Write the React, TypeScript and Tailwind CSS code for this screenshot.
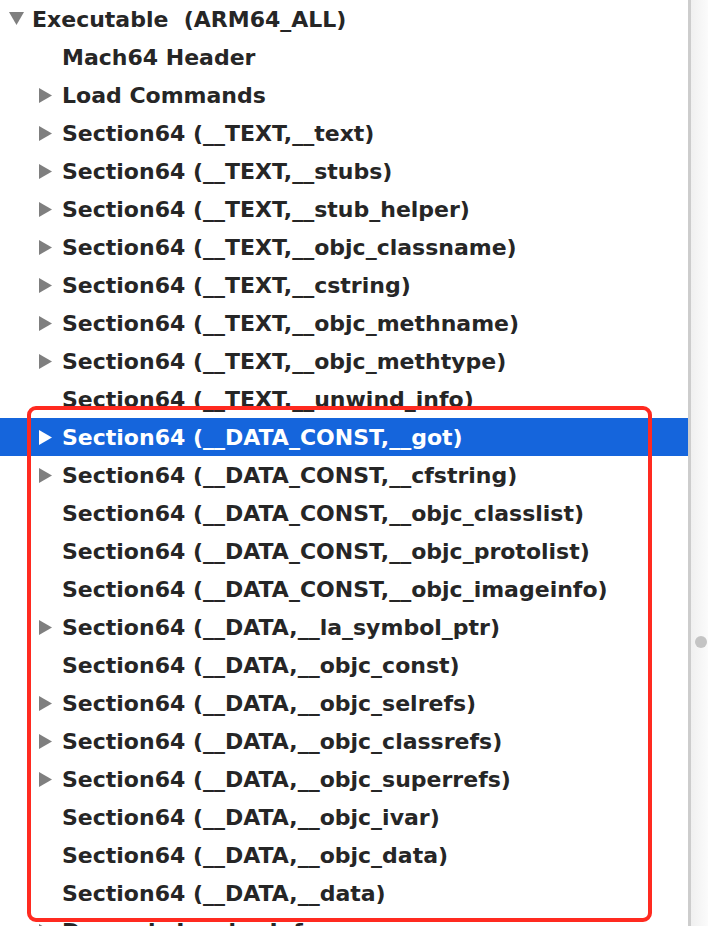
import React from "react";

type Row = { label: string; level: number; arrow: "none" | "right" | "down"; selected?: boolean };

const rows: Row[] = [
  { label: "Executable  (ARM64_ALL)", level: 0, arrow: "down" },
  { label: "Mach64 Header", level: 1, arrow: "none" },
  { label: "Load Commands", level: 1, arrow: "right" },
  { label: "Section64 (__TEXT,__text)", level: 1, arrow: "right" },
  { label: "Section64 (__TEXT,__stubs)", level: 1, arrow: "right" },
  { label: "Section64 (__TEXT,__stub_helper)", level: 1, arrow: "right" },
  { label: "Section64 (__TEXT,__objc_classname)", level: 1, arrow: "right" },
  { label: "Section64 (__TEXT,__cstring)", level: 1, arrow: "right" },
  { label: "Section64 (__TEXT,__objc_methname)", level: 1, arrow: "right" },
  { label: "Section64 (__TEXT,__objc_methtype)", level: 1, arrow: "right" },
  { label: "Section64 (__TEXT,__unwind_info)", level: 1, arrow: "none" },
  { label: "Section64 (__DATA_CONST,__got)", level: 1, arrow: "right", selected: true },
  { label: "Section64 (__DATA_CONST,__cfstring)", level: 1, arrow: "right" },
  { label: "Section64 (__DATA_CONST,__objc_classlist)", level: 1, arrow: "none" },
  { label: "Section64 (__DATA_CONST,__objc_protolist)", level: 1, arrow: "none" },
  { label: "Section64 (__DATA_CONST,__objc_imageinfo)", level: 1, arrow: "none" },
  { label: "Section64 (__DATA,__la_symbol_ptr)", level: 1, arrow: "right" },
  { label: "Section64 (__DATA,__objc_const)", level: 1, arrow: "none" },
  { label: "Section64 (__DATA,__objc_selrefs)", level: 1, arrow: "right" },
  { label: "Section64 (__DATA,__objc_classrefs)", level: 1, arrow: "right" },
  { label: "Section64 (__DATA,__objc_superrefs)", level: 1, arrow: "right" },
  { label: "Section64 (__DATA,__objc_ivar)", level: 1, arrow: "none" },
  { label: "Section64 (__DATA,__objc_data)", level: 1, arrow: "none" },
  { label: "Section64 (__DATA,__data)", level: 1, arrow: "none" },
  { label: "Dynamic Loader Info", level: 1, arrow: "right" },
];

function Arrow({ dir, selected }: { dir: "right" | "down"; selected?: boolean }) {
  const fill = selected ? "#ffffff" : "#7f7f7f";
  if (dir === "down") {
    return (
      <svg width="15" height="14" viewBox="0 0 15 14">
        <polygon points="0,0 15,0 7.5,13" fill={fill} />
      </svg>
    );
  }
  return (
    <svg width="14" height="15" viewBox="0 0 14 15">
      <polygon points="0,0 13,7.5 0,15" fill={fill} />
    </svg>
  );
}

export default function App() {
  return (
    <div className="relative flex h-[926px] w-[708px] overflow-hidden bg-white">
      <div className="flex w-[688px] flex-col">
        {rows.map((r, i) => (
          <div
            key={i}
            className={`flex h-[38px] shrink-0 items-center ${r.selected ? "bg-[#1565dc] text-white" : "text-[#262626]"}`}
          >
            <div className={`flex w-[32px] items-center justify-center ${r.level === 1 ? "ml-[30px]" : "ml-0"}`}>
              {r.arrow !== "none" && <Arrow dir={r.arrow} selected={r.selected} />}
            </div>
            <span className="whitespace-pre pt-[2px] font-['DejaVu_Sans',Verdana,sans-serif] text-[22px] font-bold leading-none">
              {r.label}
            </span>
          </div>
        ))}
      </div>
      <div className="w-[3px] bg-[#cdcdcd]" />
      <div className="relative flex-1 bg-gradient-to-r from-[#f0f0f0] to-[#fbfbfb]">
        <div className="absolute left-[4px] top-[636px] h-[12px] w-[12px] rounded-full bg-[#c4c4c4]" />
      </div>
      <div className="pointer-events-none absolute left-[27px] top-[406px] h-[516px] w-[625px] rounded-[9px] border-[4px] border-[#ff2a20]" />
    </div>
  );
}
